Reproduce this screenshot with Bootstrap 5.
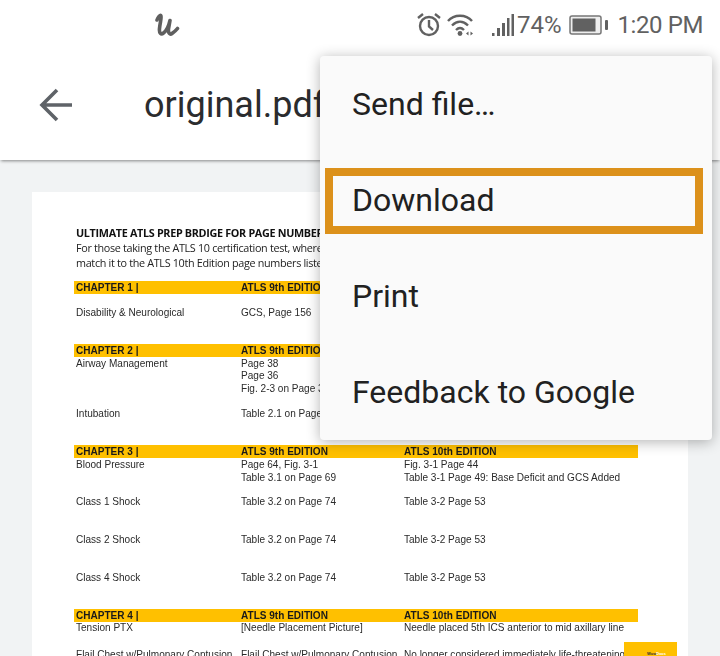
<!DOCTYPE html>
<html lang="en">
<head>
<meta charset="utf-8">
<title>original.pdf</title>
<link href="https://cdn.jsdelivr.net/npm/bootstrap@5.3.0/dist/css/bootstrap.min.css" rel="stylesheet">
<style>
html,body{width:720px;height:656px;overflow:hidden;background:#f1f3f4;}
.phone{position:relative;width:720px;height:656px;overflow:hidden;background:#f1f3f4;}
.statusbar{position:relative;z-index:2;height:50px;background:#fff;color:#616161;font:24px/50px Roboto,sans-serif;padding-left:154px;padding-right:17px;}
.statusbar svg{display:block;}
.clock{letter-spacing:-.4px;margin-left:9px;}
.pct{margin-left:2px;}
.sig{margin-left:15px;}
.appbar{height:110px;background:#fff;box-shadow:0 2px 3px -1px rgba(0,0,0,.45);position:relative;z-index:1;padding-left:38px;}
.doc-title{font:36px/1 Roboto,sans-serif;color:#2b2c2e;margin-left:70px;white-space:nowrap;}
.sheet{position:relative;width:656px;height:464px;margin:32px 0 0 32px;background:#fff;padding:33px 50px 0 42px;color:#2a2a2a;font:10.05px/12.6px "Liberation Sans",Arial,sans-serif;overflow:hidden;}
.sheet>*{filter:blur(.25px);}
.intro{font:10.8px/15px "Open Sans",sans-serif;color:#222;white-space:nowrap;height:45px;letter-spacing:-.32px;padding-left:2px;}
.intro b{font-weight:700;color:#111;}
.chap,.line{display:grid;grid-template-columns:165px 163px 1fr;white-space:nowrap;padding-left:2px;}
.chap{background:#ffc000;height:13px;font-weight:700;color:#1a1a1a;line-height:13px;}
.nudge{padding-top:1px;}
.gap-a{margin-top:13px}.gap-b{margin-top:12px}.gap-g{margin-top:11px}.gap-c{margin-top:24px}.gap-d{margin-top:24.5px}.gap-j{margin-top:25px}.gap-e{margin-top:25.4px}.gap-f{margin-top:11px}.gap-h{margin-top:14px}
.promo{position:absolute;right:11px;bottom:0;width:53px;height:14px;background:#ffc000;font:4px/1 "Liberation Sans",sans-serif;padding:10px 0 0 23px;color:#333;filter:none;}
.promo span{color:#fff;}
.popup{position:absolute;z-index:3;left:320px;top:56px;width:392px;height:384px;background:#fafafa;border-radius:4px;box-shadow:0 2px 14px rgba(0,0,0,.3);}
.popup .list-group-item{height:96px;background:transparent;border:0;padding:0 0 0 32px;font:32px/97px Roboto,sans-serif;color:#212121;}
.hilite{position:absolute;left:5px;top:112px;width:378px;height:66px;border:8px solid #dc911b;pointer-events:none;}
</style>
</head>
<body>
<div class="phone">
  <div class="statusbar d-flex align-items-center">
    <svg width="26" height="26" viewBox="0 0 26 26" fill="none" stroke="#5f5f5f" stroke-width="3.6" stroke-linecap="round" stroke-linejoin="round"><path d="M3 8C4 5 6 3 7 3.500 8 4 6 11 5.500 16.500 5 21 7 23 9.500 21 13 18.500 15 13 16 8.500L14.500 17C14 21 16 23 18 21.500 20 20 22 18.500 23.500 16.500"/></svg>
    <div class="d-flex align-items-center ms-auto">
      <svg width="26" height="26" viewBox="0 0 26 26" fill="none" stroke="#616161" stroke-width="2.400"><circle cx="13" cy="14" r="9"/><path d="M13 8v6.500l4 3.500"/><path d="M2 6l5-4M24 6l-5-4" stroke-width="2.400"/></svg>
      <svg class="ms-1" width="30" height="26" viewBox="0 0 30 26" fill="none" stroke="#616161" stroke-width="2.400"><path d="M2 9C8 2 20 2 26 9"/><path d="M6 13.500C11 8.500 17 8.500 22 13.500"/><path d="M10 18C12.500 15.500 15.500 15.500 18 18"/><circle cx="14" cy="21.500" r="2.400" fill="#616161" stroke="none"/><path d="M20 21.500l2.500-2v4zM27 21.500l-2.500-2v4z" fill="#616161" stroke="none"/></svg>
      <svg class="sig" width="24" height="24" viewBox="0 0 24 24" fill="#616161"><rect x="1" y="20" width="2.500" height="3"/><rect x="6" y="15" width="3" height="8"/><rect x="11" y="10" width="3" height="13"/><rect x="16" y="5" width="2.500" height="18"/><rect x="20.500" y="1" width="2.500" height="22"/></svg>
      <span class="pct">74%</span>
      <svg class="ms-2" width="39" height="24" viewBox="0 0 39 24"><rect x="1" y="3" width="31" height="18" rx="2" fill="#eee" stroke="#777" stroke-width="1.500"/><rect x="3.500" y="5.500" width="23" height="13" fill="#616161"/><rect x="36" y="7" width="3" height="10" rx="1" fill="#616161"/></svg>
      <span class="clock">1:20 PM</span>
    </div>
  </div>
  <div class="appbar d-flex align-items-center">
    <svg width="36" height="36" viewBox="0 0 36 36" fill="none" stroke="#5f6368" stroke-width="3.600"><path d="M34 18H5M19 3L4 18l15 15"/></svg>
    <div class="doc-title">original.pdf</div>
  </div>
  <div class="sheet">
    <div class="intro"><b>ULTIMATE ATLS PREP BRDIGE FOR PAGE NUMBERS</b><br>For those taking the ATLS 10 certification test, where<br>match it to the ATLS 10th Edition page numbers listed</div>
    <div class="chap gap-f"><div>CHAPTER 1 |</div><div>ATLS 9th EDITION</div><div></div></div>
    <div class="line gap-a"><div>Disability &amp; Neurological</div><div>GCS, Page 156</div><div></div></div>
    <div class="chap gap-c"><div>CHAPTER 2 |</div><div>ATLS 9th EDITION</div><div></div></div>
    <div class="line nudge"><div>Airway Management</div><div>Page 38<br>Page 36<br>Fig. 2-3 on Page 38</div><div></div></div>
    <div class="line gap-b nudge"><div>Intubation</div><div>Table 2.1 on Page 30</div><div></div></div>
    <div class="chap gap-d"><div>CHAPTER 3 |</div><div>ATLS 9th EDITION</div><div>ATLS 10th EDITION</div></div>
    <div class="line nudge"><div>Blood Pressure</div><div>Page 64, Fig. 3-1<br>Table 3.1 on Page 69</div><div>Fig. 3-1 Page 44<br>Table 3-1 Page 49: Base Deficit and GCS Added</div></div>
    <div class="line gap-g"><div>Class 1 Shock</div><div>Table 3.2 on Page 74</div><div>Table 3-2 Page 53</div></div>
    <div class="line gap-e"><div>Class 2 Shock</div><div>Table 3.2 on Page 74</div><div>Table 3-2 Page 53</div></div>
    <div class="line gap-e"><div>Class 4 Shock</div><div>Table 3.2 on Page 74</div><div>Table 3-2 Page 53</div></div>
    <div class="chap gap-j"><div>CHAPTER 4 |</div><div>ATLS 9th EDITION</div><div>ATLS 10th EDITION</div></div>
    <div class="line"><div>Tension PTX</div><div>[Needle Placement Picture]</div><div>Needle placed 5th ICS anterior to mid axillary line</div></div>
    <div class="line gap-h"><div>Flail Chest w/Pulmonary Contusion</div><div>Flail Chest w/Pulmonary Contusion</div><div>No longer considered immediately life-threatening</div></div>
    <div class="promo"><b>Wow<span>Docs</span></b></div>
  </div>
  <div class="popup">
    <div class="list-group list-group-flush">
      <div class="list-group-item">Send file…</div>
      <div class="list-group-item">Download</div>
      <div class="list-group-item">Print</div>
      <div class="list-group-item">Feedback to Google</div>
    </div>
    <div class="hilite"></div>
  </div>
</div>
<script src="https://cdn.jsdelivr.net/npm/bootstrap@5.3.0/dist/js/bootstrap.bundle.min.js"></script>
</body>
</html>
